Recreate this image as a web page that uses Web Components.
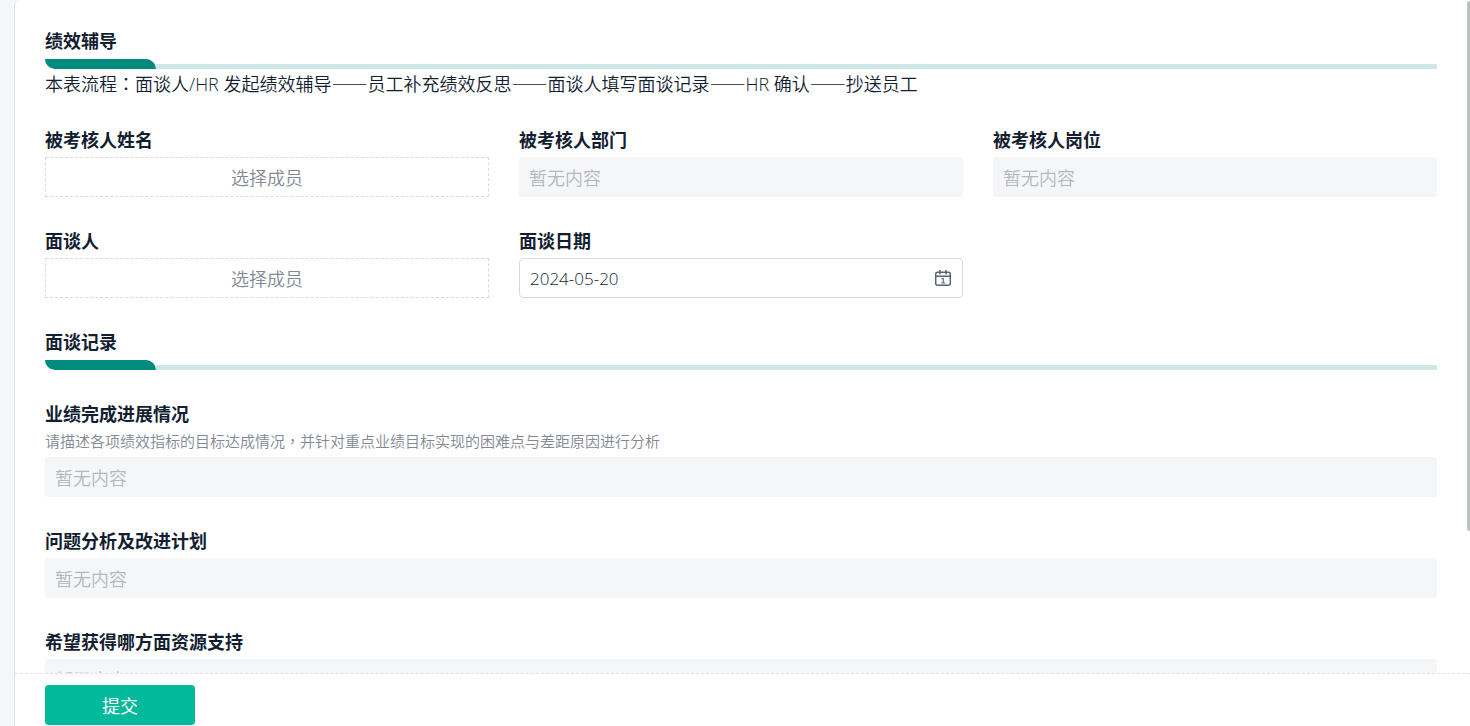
<!DOCTYPE html>
<html lang="zh-CN">
<head>
<meta charset="utf-8">
<title>绩效辅导</title>
<style>
  html, body { margin: 0; height: 100%; }
  body {
    background: #f4f6f8;
    color: #141e31;
    font-family: "Open Sans", "Noto Sans CJK SC", sans-serif;
    font-size: 18px;
    line-height: 24px;
    --accent: #01b99b;
    --accent-deep: #018a7e;
    --accent-pale: #cde8e7;
    --fill: #f4f6f8;
    --line: #d8dadd;
    --muted: #838892;
    --faint: #b4b7bd;
    --thin: 350;
  }
  .punct { font-family: "Noto Sans CJK TC", sans-serif; line-height: 1; }
</style>
</head>
<body>
<form-shell>
  <section-title>绩效辅导</section-title>
  <flow-note>本表流程<span class="punct" lang="zh-TW">：</span>面谈人/HR 发起绩效辅导<span class="punct">——</span>员工补充绩效反思<span class="punct">——</span>面谈人填写面谈记录<span class="punct">——</span>HR 确认<span class="punct">——</span>抄送员工</flow-note>
  <field-row>
    <member-field label="被考核人姓名"></member-field>
    <text-field label="被考核人部门"></text-field>
    <text-field label="被考核人岗位"></text-field>
    <member-field label="面谈人"></member-field>
    <date-field label="面谈日期" value="2024-05-20"></date-field>
  </field-row>
  <section-title>面谈记录</section-title>
  <text-field label="业绩完成进展情况"><span slot="hint">请描述各项绩效指标的目标达成情况<span class="punct" lang="zh-TW">，</span>并针对重点业绩目标实现的困难点与差距原因进行分析</span></text-field>
  <text-field label="问题分析及改进计划"></text-field>
  <text-field label="希望获得哪方面资源支持"></text-field>
  <submit-button slot="footer">提交</submit-button>
</form-shell>

<script>
const define = (name, html, setup) => {
  const template = document.createElement('template');
  template.innerHTML = html;
  customElements.define(name, class extends HTMLElement {
    constructor() {
      super();
      this.attachShadow({ mode: 'open' }).append(template.content.cloneNode(true));
    }
    connectedCallback() {
      if (setup) setup(this, this.shadowRoot);
    }
  });
};

const fieldBase = `
  :host { display: block; min-width: 0; }
  * { box-sizing: border-box; }
  label { display: block; margin-bottom: 5px; font-weight: 700; }
  input, button { font: inherit; margin: 0; outline: none; }
`;

const setLabel = (host, root) => {
  root.querySelector('label').textContent = host.getAttribute('label');
};

define('form-shell', `
  <style>
    :host { display: block; height: 100vh; padding-left: 14px; box-sizing: border-box; }
    .panel {
      position: relative; display: flex; flex-direction: column; height: 100%;
      box-sizing: border-box; background: #fff;
      border-left: 1px solid #dfe1e5; border-top-left-radius: 6px;
    }
    .scroll { flex: 1; min-height: 0; overflow-y: auto; scrollbar-width: none; }
    form { display: flex; flex-direction: column; gap: 32px; padding: 29px 33px 32px 30px; }
    .thumb {
      position: absolute; top: 1px; right: 0; width: 3px; height: 73%;
      background: #bbc0c5; border-radius: 3px 0 0 3px;
    }
    footer { padding: 11px 30px 1px; border-top: 1px dashed #dfe1e5; }
  </style>
  <div class="panel">
    <div class="scroll"><form><slot></slot></form></div>
    <footer><slot name="footer"></slot></footer>
    <div class="thumb"></div>
  </div>`);

define('section-title', `
  <style>
    :host { display: block; }
    h2 { margin: 0 0 6px; font-size: 18px; line-height: 24px; font-weight: 700; }
    .rule { display: flex; height: 10px; align-items: flex-end; }
    .lead { width: 8%; height: 10px; background: var(--accent-deep); border-radius: 0 10px 0 10px; }
    .tail { flex: 1; height: 5px; background: var(--accent-pale); }
  </style>
  <h2><slot></slot></h2>
  <div class="rule"><div class="lead"></div><div class="tail"></div></div>`);

define('flow-note', `
  <style>
    :host { display: block; margin-top: -29px; font-weight: var(--thin); }
    p { margin: 0; }
  </style>
  <p><slot></slot></p>`);

define('field-row', `
  <style>
    :host { display: grid; grid-template-columns: repeat(3, 1fr); gap: 32px 30px; }
  </style>
  <slot></slot>`);

define('member-field', `
  <style>${fieldBase}
    button {
      display: block; width: 100%; height: 40px; padding: 2px 0 0;
      border: 1px dashed var(--line); background: #fff; color: var(--muted); font-weight: var(--thin);
    }
  </style>
  <label for="pick"></label>
  <button id="pick" type="button">选择成员</button>`, setLabel);

define('text-field', `
  <style>${fieldBase}
    ::slotted([slot=hint]) {
      display: block; margin-bottom: 5px; font-size: 15px; line-height: 21px;
      font-weight: var(--thin); color: var(--muted);
    }
    input {
      display: block; width: 100%; height: 40px; padding: 2px 10px 0; border: 0;
      border-radius: 3px; background: var(--fill); color: inherit; font-weight: var(--thin);
    }
    input::placeholder { color: var(--faint); opacity: 1; }
  </style>
  <label for="value"></label>
  <slot name="hint"></slot>
  <input id="value" type="text" placeholder="暂无内容" readonly>`, setLabel);

define('date-field', `
  <style>${fieldBase}
    .box {
      display: flex; align-items: center; height: 40px; padding: 0 10px;
      border: 1px solid var(--line); border-radius: 4px; background: #fff;
    }
    input {
      flex: 1; min-width: 0; padding: 2px 0 0; border: 0; background: none;
      color: inherit; font-size: 17px; font-weight: var(--thin);
    }
    button { display: flex; padding: 0; border: 0; background: none; color: #596273; }
  </style>
  <label for="date"></label>
  <div class="box">
    <input id="date" type="text">
    <button type="button" aria-label="选择日期">
      <svg width="18" height="18" viewBox="0 0 18 18" fill="none" stroke="currentColor" stroke-width="1.5">
        <rect x="1.7" y="3.2" width="14.6" height="13.1" rx="2"/>
        <path d="M1.7 7.3H16.3M6 1v4.4M12 1v4.4"/>
        <path d="M7.4 9.8 9.2 9.4V14M7.2 14h4" stroke-width="1.1"/>
      </svg>
    </button>
  </div>`, (host, root) => {
    setLabel(host, root);
    root.querySelector('input').value = host.getAttribute('value');
  });

define('submit-button', `
  <style>
    :host { display: block; }
    button {
      display: block; width: 150px; height: 40px; padding: 2px 0 0; border: 0; border-radius: 4px;
      background: var(--accent); color: #fff; font: inherit;
    }
  </style>
  <button type="submit"><slot></slot></button>`);
</script>
</body>
</html>
